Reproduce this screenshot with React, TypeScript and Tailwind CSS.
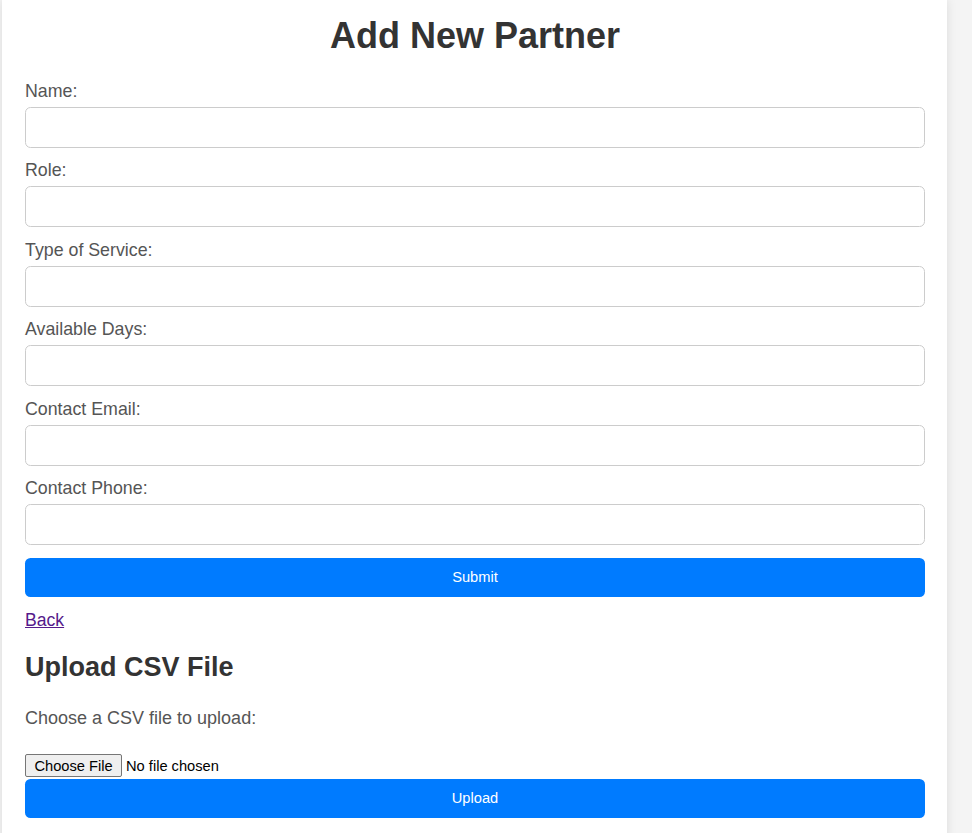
import React from "react";

const fields = [
  "Name:",
  "Role:",
  "Type of Service:",
  "Available Days:",
  "Contact Email:",
  "Contact Phone:",
];

export default function App() {
  return (
    <div
      className="min-h-screen bg-[#f4f4f4]"
      style={{ fontFamily: '"Liberation Sans", Arial, sans-serif' }}
    >
      <div className="ml-[2px] w-[945px] bg-white pl-[23px] pr-[22px] pb-[40px] shadow-[0_0_10px_rgba(0,0,0,0.1)]">
        <h1 className="pt-[16px] text-center text-[36px] font-bold leading-[40px] text-[#333]">
          Add New Partner
        </h1>
        <form className="mt-[25.8px] flex flex-col" onSubmit={(e) => e.preventDefault()}>
          <div className="flex flex-col gap-[13.5px]">
            {fields.map((f) => (
              <div key={f} className="flex flex-col">
                <label className="block h-[19px] text-[17.8px] leading-[19px] text-[#555]">
                  {f}
                </label>
                <input
                  type="text"
                  className="mt-[6px] h-[41px] w-full rounded-[5.5px] border border-[#ccc] bg-white px-[10px] outline-none"
                />
              </div>
            ))}
          </div>
          <button
            type="submit"
            className="mt-[12.5px] h-[39.4px] w-full rounded-[5.5px] bg-[#007bff] text-[14.67px] text-white"
          >
            Submit
          </button>
        </form>
        <div className="mt-[13.3px] h-[20.2px] text-[17.6px] leading-[20.2px]">
          <a href="#" className="text-[#551a8b] underline">
            Back
          </a>
        </div>
        <h2 className="mt-[21.5px] text-[27px] font-bold leading-[30.3px] text-[#333]">
          Upload CSV File
        </h2>
        <p className="mt-[25.5px] text-[18px] leading-[20.2px] text-[#555]">
          Choose a CSV file to upload:
        </p>
        <div className="mt-[26px] flex h-[23px] items-center">
          <span className="flex h-[23px] w-[97px] items-center justify-center rounded-[2px] border border-[#767676] bg-[#efefef] text-[14.67px] text-black">
            Choose File
          </span>
          <span className="ml-[4px] text-[14.67px] text-black">No file chosen</span>
        </div>
        <button
          type="button"
          className="mt-[1.7px] h-[39px] w-full rounded-[5.5px] bg-[#007bff] text-[14.67px] text-white"
        >
          Upload
        </button>
      </div>
    </div>
  );
}
